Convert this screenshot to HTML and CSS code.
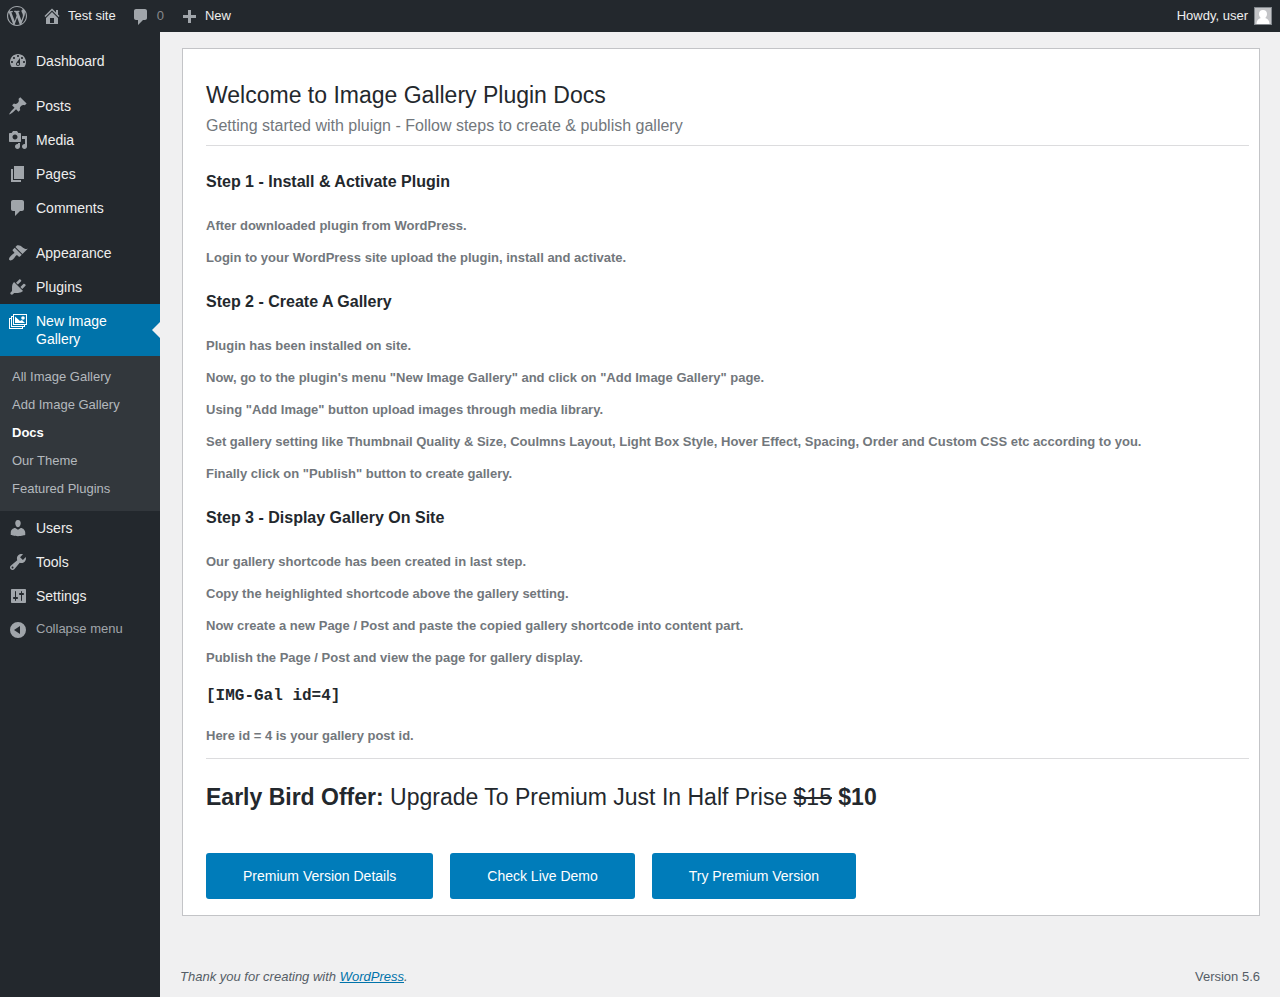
FILE: index.html
```html
<!DOCTYPE html>
<html lang="en">

<head>
    <meta charset="UTF-8">
    <meta name="viewport" content="width=device-width, initial-scale=1.0">
    <title>Docs - Test site</title>
    <link rel="stylesheet" href="styles.css">
</head>

<body>
    <header class="adminbar">
        <a href="#" class="bar-logo" aria-label="About WordPress">
            <svg class="icon" viewBox="0 0 20 20"><path d="M20 10c0-5.51-4.49-10-10-10C4.48 0 0 4.49 0 10c0 5.52 4.48 10 10 10 5.51 0 10-4.48 10-10zM7.78 15.37L4.37 6.22c.55-.02 1.17-.08 1.17-.08.5-.06.44-1.13-.06-1.11 0 0-1.45.11-2.37.11-.18 0-.37 0-.58-.01C4.12 2.69 6.87 1.11 10 1.11c2.33 0 4.45.87 6.05 2.34-.68-.11-1.65.39-1.65 1.58 0 .74.45 1.36.9 2.1.35.61.55 1.36.55 2.46 0 1.49-1.4 5-1.4 5l-3.03-8.37c.54-.02.82-.17.82-.17.5-.05.44-1.25-.06-1.22 0 0-1.44.12-2.38.12-.87 0-2.33-.12-2.33-.12-.5-.03-.56 1.2-.06 1.22l.92.08 1.26 3.41zM17.41 10c.24-.64.74-1.87.43-4.25.7 1.29 1.05 2.71 1.05 4.25 0 3.29-1.73 6.24-4.4 7.78.97-2.59 1.94-5.2 2.92-7.78zM6.1 18.09C3.12 16.65 1.11 13.53 1.11 10c0-1.3.23-2.48.72-3.59C3.25 10.3 4.67 14.2 6.1 18.09zm4.03-6.63l2.58 6.98c-.86.29-1.76.45-2.71.45-.79 0-1.57-.11-2.29-.33.81-2.38 1.62-4.74 2.42-7.1z"/></svg>
        </a>
        <a href="#" class="bar-item">
            <svg class="icon" viewBox="0 0 20 20"><path d="M16 8.5l1.53 1.53-1.06 1.06L10 4.6l-6.47 6.47-1.06-1.06L10 2.47l4 4V4h2v4.5zm-6-2.46l6 5.99V18H4v-5.97zM12 17v-5H8v5h4z"/></svg>
            <span>Test site</span>
        </a>
        <a href="#" class="bar-item">
            <svg class="icon" viewBox="0 0 20 20"><path d="M5 3h9c1.1 0 2 .9 2 2v7c0 1.1-.9 2-2 2h-2l-5 5v-5H5c-1.1 0-2-.9-2-2V5c0-1.1.9-2 2-2z"/></svg>
            <span class="count">0</span>
        </a>
        <a href="#" class="bar-item">
            <svg class="icon" viewBox="0 0 20 20"><path d="M17 9v3h-5v5H9v-5H4V9h5V4h3v5h5z"/></svg>
            <span>New</span>
        </a>
        <a href="#" class="bar-account">
            <span>Howdy, user</span>
            <svg class="avatar" viewBox="0 0 16 16"><path fill="#c3c4c7" d="M0 0h16v16H0z"/><path fill="#fff" d="M8 2c2.5 0 4 1.6 4 4 0 1.8-.8 3.2-1.8 4 2.5.8 4.3 2.5 4.3 6h-13c0-3.5 1.8-5.2 4.3-6C4.8 9.2 4 7.8 4 6c0-2.4 1.5-4 4-4z"/></svg>
        </a>
    </header>

    <div class="wrap">
        <nav class="sidebar">
            <ul class="menu">
                <li><a href="#">
                    <svg class="icon" viewBox="0 0 20 20"><path fill-rule="evenodd" d="M3.76 16h12.48c1.1-1.37 1.76-3.11 1.76-5 0-4.42-3.58-8-8-8s-8 3.58-8 8c0 1.89.66 3.63 1.76 5zM10 4c.55 0 1 .45 1 1s-.45 1-1 1-1-.45-1-1 .45-1 1-1zM6 6c.55 0 1 .45 1 1s-.45 1-1 1-1-.45-1-1 .45-1 1-1zm8 0c.55 0 1 .45 1 1s-.45 1-1 1-1-.45-1-1 .45-1 1-1zm-5.37 5.55L12 7v6c0 1.1-.9 2-2 2s-2-.9-2-2c0-.57.24-1.08.63-1.45zM4 10c.55 0 1 .45 1 1s-.45 1-1 1-1-.45-1-1 .45-1 1-1zm12 0c.55 0 1 .45 1 1s-.45 1-1 1-1-.45-1-1 .45-1 1-1zm-5 3c0-.55-.45-1-1-1s-1 .45-1 1 .45 1 1 1 1-.45 1-1z"/></svg>
                    <span>Dashboard</span></a></li>
                <li class="separator"></li>
                <li><a href="#">
                    <svg class="icon" viewBox="0 0 20 20"><path d="M10.44 3.02l1.82-1.82 6.36 6.35-1.83 1.82c-1.05-.68-2.48-.57-3.41.36l-.75.75c-.92.93-1.04 2.35-.35 3.41l-1.83 1.82-2.41-2.41-2.8 2.79c-.42.42-3.38 2.71-3.8 2.29s1.86-3.39 2.28-3.81l2.79-2.79L4.1 9.36l1.83-1.82c1.05.69 2.48.57 3.4-.36l.75-.75c.93-.92 1.05-2.35.36-3.41z"/></svg>
                    <span>Posts</span></a></li>
                <li><a href="#">
                    <svg class="icon" viewBox="0 0 20 20"><path fill-rule="evenodd" d="M13 11V4c0-.55-.45-1-1-1h-1.67L9 1H5L3.67 3H2c-.55 0-1 .45-1 1v7c0 .55.45 1 1 1h10c.55 0 1-.45 1-1zM7 4.5c1.38 0 2.5 1.12 2.5 2.5S8.38 9.5 7 9.5 4.5 8.38 4.5 7 5.62 4.5 7 4.5zM14 6h5v10.5c0 1.38-1.12 2.5-2.5 2.5S14 17.88 14 16.5s1.12-2.5 2.5-2.5c.17 0 .34.02.5.05V9h-3V6zm-4 8.05V13h2v3.5c0 1.38-1.12 2.5-2.5 2.5S7 17.88 7 16.5 8.12 14 9.5 14c.17 0 .34.02.5.05z"/></svg>
                    <span>Media</span></a></li>
                <li><a href="#">
                    <svg class="icon" viewBox="0 0 20 20"><path d="M6 15V2h10v13H6zm-1 1h8v2H3V5h2v11z"/></svg>
                    <span>Pages</span></a></li>
                <li><a href="#">
                    <svg class="icon" viewBox="0 0 20 20"><path d="M5 2h9c1.1 0 2 .9 2 2v7c0 1.1-.9 2-2 2h-2l-5 5v-5H5c-1.1 0-2-.9-2-2V4c0-1.1.9-2 2-2z"/></svg>
                    <span>Comments</span></a></li>
                <li class="separator"></li>
                <li><a href="#">
                    <svg class="icon" viewBox="0 0 20 20"><path d="M14.48 11.06L7.41 3.99l1.5-1.5c.5-.56 2.3-.47 3.51.32 1.21.8 1.43 1.28 2.91 2.1 1.18.64 2.45 1.26 4.45.85zm-.71.71L6.7 4.7 4.93 6.47c-.39.39-.39 1.02 0 1.41l1.06 1.06c.39.39.39 1.03 0 1.42-.6.6-1.43 1.11-2.21 1.69-.35.26-.7.53-1.01.84C1.43 14.23.4 16.08 1.4 17.07c.99 1 2.84-.03 4.18-1.36.31-.31.58-.66.85-1.02.57-.78 1.08-1.61 1.69-2.21.39-.39 1.02-.39 1.41 0l1.06 1.06c.39.39 1.02.39 1.41 0z"/></svg>
                    <span>Appearance</span></a></li>
                <li><a href="#">
                    <svg class="icon" viewBox="0 0 20 20"><path d="M13.11 4.36L9.87 7.6 8 5.73l3.24-3.24c.35-.34 1.05-.2 1.56.32.52.51.66 1.21.31 1.55zm-8 1.77l.91-1.12 9.01 9.01-1.19.84c-.71.71-2.63 1.16-3.82 1.16H6.14L4.9 17.26c-.59.59-1.54.59-2.12 0-.59-.58-.59-1.53 0-2.12l1.24-1.24v-3.88c0-1.13.4-3.19 1.09-3.89zm7.26 3.97l3.24-3.24c.34-.35 1.04-.21 1.55.31.52.51.66 1.21.31 1.55l-3.24 3.25z"/></svg>
                    <span>Plugins</span></a></li>
                <li class="current"><a href="#">
                    <svg class="icon" viewBox="0 0 20 20"><path fill-rule="evenodd" d="M5 3h14v11h-2v2h-2v2H1V7h2V5h2V3zm13 10V4H6v9h12zM5 14V6H4v9h12v-1H5zm-2 2V8H2v9h12v-1H3z"/><path d="M7 5.5l5 4.5 2-1 3 3H7z"/><circle cx="15" cy="7" r="1.8"/></svg>
                    <span>New Image Gallery</span></a>
                    <ul class="submenu">
                        <li><a href="#">All Image Gallery</a></li>
                        <li><a href="#">Add Image Gallery</a></li>
                        <li><a href="#" class="active">Docs</a></li>
                        <li><a href="#">Our Theme</a></li>
                        <li><a href="#">Featured Plugins</a></li>
                    </ul>
                </li>
                <li><a href="#">
                    <svg class="icon" viewBox="0 0 20 20"><path d="M10 9.25c-2.27 0-2.73-3.44-2.73-3.44C7 4.02 7.82 2 9.97 2c2.16 0 2.98 2.02 2.71 3.81 0 0-.41 3.44-2.68 3.44zm0 2.57L12.72 10c2.39 0 4.52 2.33 4.52 4.53v2.49s-3.65 1.13-7.24 1.13c-3.65 0-7.24-1.13-7.24-1.13v-2.49c0-2.25 1.94-4.48 4.47-4.48z"/></svg>
                    <span>Users</span></a></li>
                <li><a href="#">
                    <svg class="icon" viewBox="0 0 20 20"><path fill-rule="evenodd" d="M16.68 9.77c-1.34 1.34-3.3 1.67-4.95.99l-5.41 6.52c-.99.99-2.59.99-3.58 0s-.99-2.59 0-3.57l6.52-5.42c-.68-1.65-.35-3.61.99-4.95 1.28-1.28 3.12-1.62 4.72-1.06l-2.89 2.89 2.82 2.82 2.86-2.87c.53 1.58.18 3.39-1.08 4.65zM3.81 16.21c.4.39 1.04.39 1.43 0 .4-.4.4-1.04 0-1.43-.39-.4-1.03-.4-1.43 0-.39.39-.39 1.03 0 1.43z"/></svg>
                    <span>Tools</span></a></li>
                <li><a href="#">
                    <svg class="icon" viewBox="0 0 20 20"><path fill-rule="evenodd" d="M18 16V4c0-.55-.45-1-1-1H4c-.55 0-1 .45-1 1v12c0 .55.45 1 1 1h13c.55 0 1-.45 1-1zM8 11h1c.55 0 1 .45 1 1s-.45 1-1 1H8v1.5c0 .28-.22.5-.5.5s-.5-.22-.5-.5V13H6c-.55 0-1-.45-1-1s.45-1 1-1h1V5.5c0-.28.22-.5.5-.5s.5.22.5.5V11zm5-2h-1c-.55 0-1-.45-1-1s.45-1 1-1h1V5.5c0-.28.22-.5.5-.5s.5.22.5.5V7h1c.55 0 1 .45 1 1s-.45 1-1 1h-1v5.5c0 .28-.22.5-.5.5s-.5-.22-.5-.5V9z"/></svg>
                    <span>Settings</span></a></li>
            </ul>
            <button type="button" class="collapse">
                <svg class="icon" viewBox="0 0 20 20"><path fill-rule="evenodd" d="M10 2a8 8 0 1 1 0 16 8 8 0 0 1 0-16zm2 12V6l-6 4z"/></svg>
                <span>Collapse menu</span>
            </button>
        </nav>

        <div class="content">
            <main class="panel">
                <h1>Welcome to Image Gallery Plugin Docs</h1>
                <p class="about">Getting started with pluign - Follow steps to create &amp; publish gallery</p>
                <hr>

                <h2>Step 1 - Install &amp; Activate Plugin</h2>
                <div class="step">
                    <p>After downloaded plugin from WordPress.</p>
                    <p>Login to your WordPress site upload the plugin, install and activate.</p>
                </div>

                <h2>Step 2 - Create A Gallery</h2>
                <div class="step">
                    <p>Plugin has been installed on site.</p>
                    <p>Now, go to the plugin's menu "New Image Gallery" and click on "Add Image Gallery" page.</p>
                    <p>Using "Add Image" button upload images through media library.</p>
                    <p>Set gallery setting like Thumbnail Quality &amp; Size, Coulmns Layout, Light Box Style, Hover Effect, Spacing, Order and Custom CSS etc according to you.</p>
                    <p>Finally click on "Publish" button to create gallery.</p>
                </div>

                <h2>Step 3 - Display Gallery On Site</h2>
                <div class="step">
                    <p>Our gallery shortcode has been created in last step.</p>
                    <p>Copy the heighlighted shortcode above the gallery setting.</p>
                    <p>Now create a new Page / Post and paste the copied gallery shortcode into content part.</p>
                    <p>Publish the Page / Post and view the page for gallery display.</p>
                    <code>[IMG-Gal id=4]</code>
                    <p>Here id = 4 is your gallery post id.</p>
                </div>
                <hr>

                <div class="offer"><strong>Early Bird Offer:</strong> Upgrade To Premium Just In Half Prise <s>$15</s> <strong>$10</strong></div>
                <div class="buttons">
                    <a href="#" class="button">Premium Version Details</a>
                    <a href="#" class="button">Check Live Demo</a>
                    <a href="#" class="button">Try Premium Version</a>
                </div>
            </main>

            <footer class="footer">
                <em>Thank you for creating with <a href="#">WordPress</a>.</em>
                <span>Version 5.6</span>
            </footer>
        </div>
    </div>
</body>

</html>
```
FILE: styles.css
```css
* {
    box-sizing: border-box;
}

body {
    margin: 0;
    min-height: 100vh;
    display: flex;
    flex-direction: column;
    background-color: #f0f0f1;
    color: #3c434a;
    font-family: "Liberation Sans", Arial, sans-serif;
    font-size: 13px;
}

ul {
    list-style: none;
    margin: 0;
    padding: 0;
}

.icon {
    width: 20px;
    height: 20px;
    flex: none;
    fill: #a0a5aa;
}

/* top bar */
.adminbar {
    display: flex;
    align-items: center;
    height: 32px;
    padding: 0 8px 0 7px;
    background-color: #23282d;
}

.adminbar a {
    display: flex;
    align-items: center;
    color: #eee;
    line-height: 32px;
    text-decoration: none;
}

.bar-logo {
    margin-right: 15px;
}

.bar-item {
    gap: 6px;
    margin-right: 15px;
}

.adminbar .count {
    color: #87898c;
}

.adminbar .bar-account {
    gap: 6px;
    margin-left: auto;
}

.avatar {
    width: 18px;
    height: 18px;
    border: 1px solid #82878c;
}

.wrap {
    display: flex;
    flex: 1;
}

/* left menu */
.sidebar {
    width: 160px;
    flex: none;
    padding-top: 12px;
    background-color: #23282d;
}

.menu > li > a {
    display: flex;
    gap: 8px;
    padding: 8px;
    color: #eee;
    font-size: 14px;
    line-height: 18px;
    text-decoration: none;
}

.menu .icon {
    margin: -1px 0;
}

.menu .separator {
    height: 11px;
}

.menu .current > a {
    position: relative;
    background-color: #0073aa;
    color: #fff;
}

.current .icon {
    fill: #fff;
}

.menu .current > a::after {
    content: "";
    position: absolute;
    right: 0;
    top: 18px;
    border: 8px solid transparent;
    border-right-color: #f0f0f1;
    border-left-width: 0;
}

.submenu {
    padding: 7px 0 8px;
    background-color: #32373c;
}

.submenu a {
    display: block;
    padding: 5px 12px;
    color: #b4b9be;
    line-height: 18px;
    text-decoration: none;
}

.submenu .active {
    color: #fff;
    font-weight: 600;
}

.collapse {
    display: flex;
    gap: 8px;
    width: 100%;
    padding: 7px 8px;
    border: 0;
    background: none;
    color: #a0a5aa;
    font: inherit;
    line-height: 18px;
    cursor: pointer;
}

/* docs page */
.content {
    flex: 1;
    min-width: 0;
    display: flex;
    flex-direction: column;
    padding: 16px 20px 10px;
}

.panel {
    margin-left: 2px;
    padding: 32px 10px 16px 23px;
    border: 1px solid #c3c4c7;
    background-color: #fff;
    color: #23282d;
}

.panel h1,
.offer {
    margin: 0;
    font-size: 23px;
    font-weight: 400;
    line-height: 28px;
}

.panel .about {
    margin: 6px 0 8px;
    color: #72777c;
    font-size: 16px;
    line-height: 22px;
}

.panel hr {
    margin: 0 0 24px;
    border: 0;
    border-top: 1px solid #dcdcde;
}

.panel h2 {
    margin: 22px 0;
    font-size: 16px;
    line-height: 24px;
}

.step p {
    margin: 12px 0;
    color: #72777c;
    font-weight: 600;
    line-height: 20px;
}

.step code {
    display: block;
    margin: 18px 0 20px;
    font-family: "Liberation Mono", monospace;
    font-size: 16px;
    font-weight: 600;
    line-height: 20px;
}

.buttons {
    display: flex;
    flex-wrap: wrap;
    gap: 17px;
    margin-top: 42px;
}

.button {
    padding: 0 37px;
    border-radius: 3px;
    background-color: #007cba;
    color: #fff;
    font-size: 14px;
    line-height: 46px;
    text-decoration: none;
}

.footer {
    display: flex;
    justify-content: space-between;
    margin-top: auto;
    padding-top: 50px;
    color: #555d66;
    line-height: 20px;
}

.footer a {
    color: #0073aa;
}
```
